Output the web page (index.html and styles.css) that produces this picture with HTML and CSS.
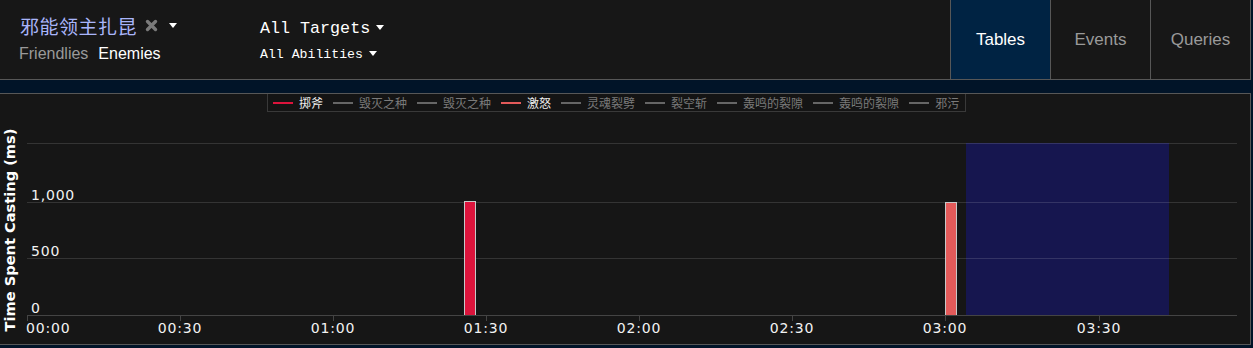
FILE: index.html
```html
<!DOCTYPE html>
<html lang="zh">
<head>
    <meta charset="UTF-8">
    <title>Time Spent Casting</title>
    <link rel="stylesheet" href="styles.css">
</head>
<body>

<!-- Top bar: unit picker, target/ability filters, view tabs -->
<header class="topbar">
    <div class="unit-picker">
        <div class="unit-name">
            <span class="boss">邪能领主扎昆</span>
            <svg class="remove" width="13" height="13" viewBox="0 0 13 13">
                <path d="M2.5 2.5 L10.5 10.5 M10.5 2.5 L2.5 10.5" stroke="#7a7a7a" stroke-width="3.4" stroke-linecap="round"/>
            </svg>
            <span class="caret"></span>
        </div>
        <div class="sides">
            <a href="#" class="side">Friendlies</a>
            <a href="#" class="side active">Enemies</a>
        </div>
    </div>

    <div class="filters">
        <div class="filter big">All Targets<span class="caret"></span></div>
        <div class="filter small">All Abilities<span class="caret"></span></div>
    </div>

    <nav class="tabs">
        <a href="#" class="tab active">Tables</a>
        <a href="#" class="tab">Events</a>
        <a href="#" class="tab">Queries</a>
    </nav>
</header>

<!-- Chart panel -->
<section class="chart-panel">
    <div class="legend">
        <span class="legend-item on"><i style="background:#dc143c"></i>掷斧</span>
        <span class="legend-item"><i></i>毁灭之种</span>
        <span class="legend-item"><i></i>毁灭之种</span>
        <span class="legend-item on"><i style="background:#e35a5a"></i>激怒</span>
        <span class="legend-item"><i></i>灵魂裂劈</span>
        <span class="legend-item"><i></i>裂空斩</span>
        <span class="legend-item"><i></i>轰鸣的裂隙</span>
        <span class="legend-item"><i></i>轰鸣的裂隙</span>
        <span class="legend-item"><i></i>邪污</span>
    </div>

    <svg class="chart" width="1250" height="232" viewBox="0 0 1250 232">
        <!-- selected range -->
        <rect x="966" y="31" width="203" height="172" fill="#16164f"/>

        <!-- grid -->
        <g stroke="rgba(255,255,255,0.13)" stroke-width="1">
            <line x1="27" y1="31.5" x2="1237" y2="31.5"/>
            <line x1="27" y1="90.5" x2="1237" y2="90.5"/>
            <line x1="27" y1="146.5" x2="1237" y2="146.5"/>
        </g>

        <!-- bars -->
        <rect x="464.5" y="89.5" width="11" height="114" fill="#dc143c" stroke="#c8c8c8"/>
        <rect x="945.5" y="90.5" width="11" height="113" fill="#e35a5a" stroke="#c8c8c8"/>

        <!-- x axis -->
        <g stroke="#444" stroke-width="1">
            <line x1="27" y1="203.5" x2="1237" y2="203.5"/>
            <line x1="27.5" y1="203" x2="27.5" y2="209"/>
            <line x1="180.5" y1="203" x2="180.5" y2="209"/>
            <line x1="333.5" y1="203" x2="333.5" y2="209"/>
            <line x1="486.5" y1="203" x2="486.5" y2="209"/>
            <line x1="639.5" y1="203" x2="639.5" y2="209"/>
            <line x1="792.5" y1="203" x2="792.5" y2="209"/>
            <line x1="945.5" y1="203" x2="945.5" y2="209"/>
            <line x1="1099.5" y1="203" x2="1099.5" y2="209"/>
        </g>

        <g class="tick-label">
            <text x="26" y="221">00:00</text>
            <text x="180" y="221" text-anchor="middle">00:30</text>
            <text x="333" y="221" text-anchor="middle">01:00</text>
            <text x="486" y="221" text-anchor="middle">01:30</text>
            <text x="639" y="221" text-anchor="middle">02:00</text>
            <text x="792" y="221" text-anchor="middle">02:30</text>
            <text x="945" y="221" text-anchor="middle">03:00</text>
            <text x="1099" y="221" text-anchor="middle">03:30</text>
        </g>

        <g class="tick-label">
            <text x="31" y="88">1,000</text>
            <text x="31" y="144">500</text>
            <text x="31" y="201">0</text>
        </g>

        <text class="axis-title" transform="translate(15 118) rotate(-90)" text-anchor="middle">Time Spent Casting (ms)</text>
    </svg>
</section>

</body>
</html>
```

FILE: styles.css
```css
/* Basic reset */
* {
    box-sizing: border-box;
    margin: 0;
    padding: 0;
}

:root {
    --navy: #011428;
    --panel: #171717;
    --line: #575757;
    --muted: #9a9a9a;
    --boss: #a9b5fa;
}

body {
    background-color: var(--navy);
    font-family: Arial, 'Liberation Sans', sans-serif;
    color: #fff;
    width: 1253px;
    height: 348px;
    overflow: hidden;
}

a {
    text-decoration: none;
    color: inherit;
}

/* Top bar */
.topbar {
    display: flex;
    width: 1251px;
    height: 80px;
    background-color: var(--panel);
    border-bottom: 1px solid var(--line);
    border-right: 1px solid var(--line);
}

.unit-picker {
    width: 260px;
    padding: 11px 0 0 20px;
}

.unit-name {
    display: flex;
    align-items: center;
    height: 28px;
}

.boss {
    font-family: 'Noto Sans CJK SC', sans-serif;
    font-size: 19px;
    letter-spacing: 0.5px;
    color: var(--boss);
}

.remove {
    margin-left: 8px;
}

.caret {
    display: inline-block;
    width: 0;
    height: 0;
    border-left: 4.5px solid transparent;
    border-right: 4.5px solid transparent;
    border-top: 5px solid #fff;
    margin-left: 7px;
    vertical-align: middle;
}

.unit-name .caret {
    margin-left: 11px;
}

.sides {
    display: flex;
    gap: 10px;
    height: 20px;
    margin-top: 5px;
    align-items: center;
    font-size: 16px;
    margin-left: -1px;
}

.side {
    color: var(--muted);
}

.side.active {
    color: #fff;
}

/* Target / ability filters */
.filters {
    width: 690px;
    padding-top: 16px;
    font-family: 'Liberation Mono', monospace;
    color: #fff;
}

.filter {
    white-space: nowrap;
}

.filter.big {
    font-size: 16.7px;
    height: 26px;
    line-height: 26px;
}

.filter.small {
    font-size: 13.2px;
    height: 20px;
    line-height: 20px;
    margin-top: 3px;
}

.filter .caret {
    margin-left: 6px;
    margin-top: -2px;
}

/* View tabs */
.tabs {
    display: flex;
}

.tab {
    width: 100px;
    height: 79px;
    border-left: 1px solid var(--line);
    display: flex;
    align-items: center;
    justify-content: center;
    padding-top: 1px;
    font-size: 17px;
    color: var(--muted);
}

.tab.active {
    background-color: #002343;
    color: #fff;
}

/* Chart panel */
.chart-panel {
    width: 1251px;
    margin-top: 13px;
    background-color: #161616;
    border-top: 1px solid var(--line);
    border-bottom: 1px solid var(--line);
    border-right: 1px solid var(--line);
}

.legend {
    display: flex;
    align-items: center;
    width: 699px;
    height: 18px;
    margin-left: 267px;
    padding-left: 5px;
    background-color: #141414;
    border: 1px solid #393939;
    border-top: none;
    font-family: 'Noto Sans CJK SC', sans-serif;
    font-size: 12px;
    line-height: 17px;
    color: #7a7a7a;
    white-space: nowrap;
    overflow: hidden;
}

.legend-item {
    display: flex;
    flex-shrink: 0;
    align-items: center;
    margin-right: 10px;
}

.legend-item i {
    display: block;
    flex-shrink: 0;
    width: 20px;
    height: 2px;
    margin-right: 6px;
    background-color: #666;
}

.legend-item.on {
    color: #eee;
}

.chart {
    display: block;
}

.tick-label {
    font-family: 'DejaVu Sans', sans-serif;
    font-size: 14px;
    letter-spacing: 0.8px;
    fill: #f2f2f2;
}

.axis-title {
    font-family: 'DejaVu Sans', sans-serif;
    font-weight: bold;
    font-size: 14.6px;
    fill: #fff;
}
```
